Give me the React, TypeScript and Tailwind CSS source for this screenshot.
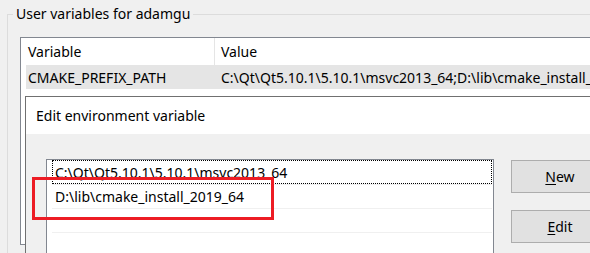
export default function App() {
  return (
    <div className="relative h-[253px] w-[590px] overflow-hidden bg-[#f0f0f0] font-['Noto_Sans',sans-serif] text-[14px] text-black">
      {/* User variables group */}
      <fieldset className="ml-[7px] mt-[4px] h-[320px] w-[700px] border border-[#dcdcdc] pl-[5px] pt-[13px]">
        <legend className="px-[3px] leading-[20px]">User variables for adamgu</legend>

        {/* Variables list view */}
        <div className="ml-[7px] h-[208px] w-[700px] border border-[#828790] bg-white">
          <div className="flex h-[27px] items-center">
            <div className="flex h-full w-[194px] items-center border-r border-[#e5e5e5] pl-[7px]">Variable</div>
            <div className="pl-[6px]">Value</div>
          </div>
          <div className="ml-[5px] flex h-[24px] items-center bg-[#e5e5e5] whitespace-nowrap">
            <div className="w-[188px] pl-[2px]">CMAKE_PREFIX_PATH</div>
            <div className="pl-[7px]">C:\Qt\Qt5.10.1\5.10.1\msvc2013_64;D:\lib\cmake_install_2019_64</div>
          </div>
          <div className="ml-[5px] flex h-[24px] items-center whitespace-nowrap">
            <div className="w-[188px] pl-[2px]">Path</div>
            <div className="pl-[7px]">C:\Users\adamgu\AppData\Local\Microsoft\WindowsApps;</div>
          </div>
        </div>
      </fieldset>

      {/* Edit environment variable dialog */}
      <div className="absolute left-[25px] top-[96px] h-[300px] w-[700px] border border-[#707070] bg-[#f0f0f0]">
        <div className="flex h-[37px] items-center bg-white pl-[10px]">Edit environment variable</div>
        <div className="flex gap-[17px] pl-[20px] pt-[25px]">
          <div className="h-[200px] w-[448px] shrink-0 border border-[#828790] bg-white pr-px pl-[5px]">
            <div className="h-[25px] border-b border-[#f0f0f0]">
              <div className="flex h-[24px] items-center border border-dotted border-black pl-[2px] whitespace-nowrap">
                C:\Qt\Qt5.10.1\5.10.1\msvc2013_64
              </div>
            </div>
            <div className="flex h-[24px] items-center border-b border-[#f0f0f0] pl-[3px] whitespace-nowrap">
              D:\lib\cmake_install_2019_64
            </div>
            <div className="h-[24px] border-b border-[#f0f0f0]" />
          </div>
          <div className="flex flex-col gap-[17px] pt-px">
            <button className="h-[33px] w-[98px] border border-[#adadad] bg-[#e1e1e1]">
              <span className="underline underline-offset-2">N</span>ew
            </button>
            <button className="h-[33px] w-[98px] border border-[#adadad] bg-[#e1e1e1]">
              <span className="underline underline-offset-2">E</span>dit
            </button>
          </div>
        </div>
      </div>

      {/* Highlight annotation */}
      <div className="absolute left-[32px] top-[177px] h-[43px] w-[242px] border-[3px] border-[#ed1c24]" />
    </div>
  );
}
